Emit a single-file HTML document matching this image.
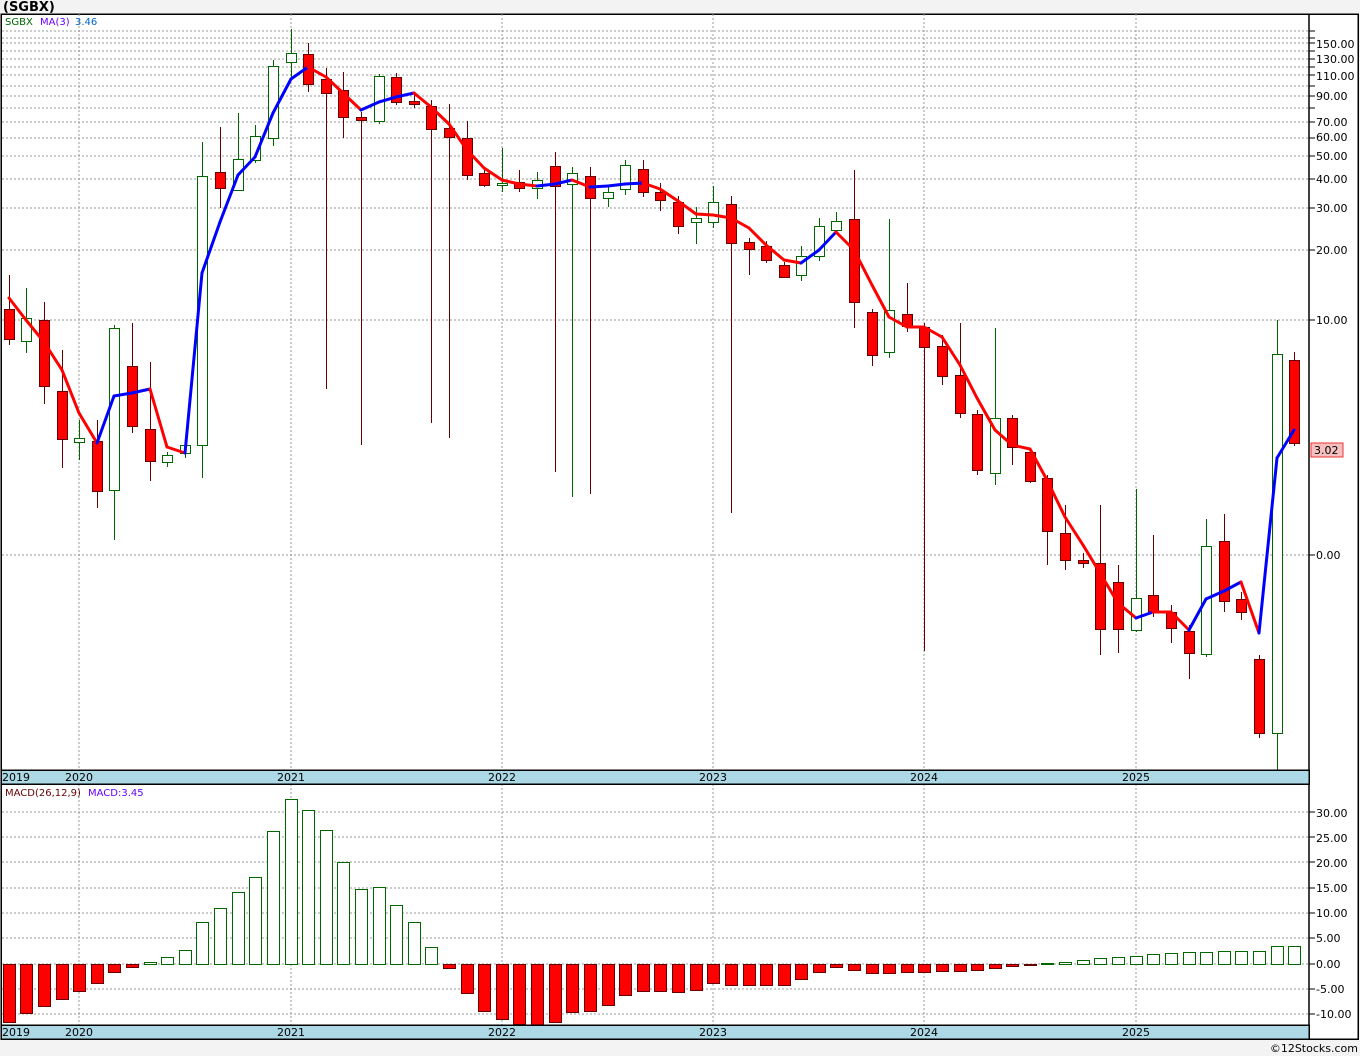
<!DOCTYPE html>
<html><head><meta charset="utf-8"><style>
html,body{margin:0;padding:0;background:#f3f3f3;width:1360px;height:1056px;overflow:hidden;font-family:"Liberation Sans","DejaVu Sans",sans-serif}
svg{position:absolute;left:0;top:0}
text{font-family:"DejaVu Sans","Liberation Sans",sans-serif}
#grid,#cand,#mac,#ticks{shape-rendering:crispEdges}
</style></head><body>
<svg id="s" width="1360" height="1056" xmlns="http://www.w3.org/2000/svg">
<rect x="1" y="14" width="1357" height="1025" fill="#fff" stroke="#000" stroke-width="1.5" shape-rendering="crispEdges"/>
<g id="grid"></g>
<g id="mac"></g>
<g id="cand"></g>
<g id="ma"></g>
<line x1="1309" y1="14" x2="1309" y2="1039" stroke="#000" stroke-width="1.5"/>
<rect x="1" y="770" width="1308" height="14" fill="#add8e6" stroke="#000" stroke-width="1.5" shape-rendering="crispEdges"/>
<rect x="1" y="1025" width="1308" height="14" fill="#add8e6" stroke="#000" stroke-width="1.5" shape-rendering="crispEdges"/>
<g id="ticks"></g>
<text x="3" y="11" font-size="13" font-weight="bold" fill="#000">(SGBX)</text>
<text x="5" y="25" font-size="10" fill="#060">SGBX</text>
<text x="40" y="25" font-size="10" fill="#60f">MA(3)</text>
<text x="75" y="25" font-size="10" fill="#06c">3.46</text>
<text x="5" y="796" font-size="10" fill="#600">MACD(26,12,9)</text>
<text x="88" y="796" font-size="10" fill="#60f">MACD:3.45</text>
<g font-size="11" fill="#000">
<text x="2" y="781">2019</text><text x="65" y="781">2020</text><text x="277" y="781">2021</text><text x="488" y="781">2022</text><text x="699" y="781">2023</text><text x="910" y="781">2024</text><text x="1122" y="781">2025</text>
<text x="2" y="1036">2019</text><text x="65" y="1036">2020</text><text x="277" y="1036">2021</text><text x="488" y="1036">2022</text><text x="699" y="1036">2023</text><text x="910" y="1036">2024</text><text x="1122" y="1036">2025</text>
</g>
<g font-size="11" fill="#000">
<text x="1316" y="48">150.00</text><text x="1316" y="63">130.00</text><text x="1316" y="80">110.00</text><text x="1316" y="100">90.00</text>
<text x="1316" y="126">70.00</text><text x="1316" y="141">60.00</text><text x="1316" y="160">50.00</text><text x="1316" y="183">40.00</text>
<text x="1316" y="212">30.00</text><text x="1316" y="254">20.00</text><text x="1316" y="324">10.00</text><text x="1316" y="559">0.00</text>
<text x="1316" y="817">30.00</text><text x="1316" y="842">25.00</text><text x="1316" y="867">20.00</text><text x="1316" y="892">15.00</text>
<text x="1316" y="917">10.00</text><text x="1316" y="942">5.00</text><text x="1316" y="968">0.00</text><text x="1316" y="993">-5.00</text><text x="1316" y="1018">-10.00</text>
</g>
<rect x="1311" y="443" width="32" height="14" fill="#f6c0c0" stroke="#e33" stroke-width="1"/>
<text x="1314" y="454" font-size="11" fill="#000">3.02</text>
<text x="1358" y="1052" font-size="11" fill="#000" text-anchor="end">©12Stocks.com</text>
</svg>
<script>
var NS="http://www.w3.org/2000/svg";
function el(p,t,a){var e=document.createElementNS(NS,t);for(var k in a)e.setAttribute(k,a[k]);document.getElementById(p).appendChild(e);return e;}
var hy=[31,38,43,51,59,67,75,86,96,108,122,138,156,179,208,250,320,555];
hy.forEach(function(y){el('grid','line',{x1:2,x2:1309,y1:y,y2:y,stroke:'#999','stroke-dasharray':'2,2','stroke-width':1});el('ticks','line',{x1:1309,x2:1315,y1:y,y2:y,stroke:'#000'});});
[812,837,862,888,913,938,964,989,1014].forEach(function(y){el('grid','line',{x1:2,x2:1309,y1:y,y2:y,stroke:'#999','stroke-dasharray':'2,2','stroke-width':1});el('ticks','line',{x1:1309,x2:1315,y1:y,y2:y,stroke:'#000'});});
[79,291,502,713,924,1136].forEach(function(x){el('grid','line',{x1:x,x2:x,y1:14,y2:770,stroke:'#999','stroke-dasharray':'2,2'});el('grid','line',{x1:x,x2:x,y1:784,y2:1025,stroke:'#999','stroke-dasharray':'2,2'});});
var C=[[9,'r',309,339,275,345],[26,'g',318,341,288,353],[44,'r',320,386,302,404],[62,'r',391,439,350,468],[79,'g',438,442,420,460],[97,'r',441,491,420,508],[114,'g',328,490,325,540],[132,'r',366,426,323,433],[150,'r',429,461,362,481],[167,'g',455,462,452,467],[185,'g',445,453,442,458],[202,'g',176,445,142,478],[220,'r',172,188,127,208],[238,'g',159,190,113,190],[255,'g',136,160,125,163],[273,'g',66,138,60,146],[291,'g',53,62,29,78],[308,'r',54,84,43,92],[326,'r',79,93,68,389],[343,'r',90,117,72,138],[361,'r',117,120,112,445],[379,'g',76,121,74,124],[396,'r',77,102,73,105],[414,'r',101,104,95,108],[431,'r',106,129,100,423],[449,'r',128,137,104,438],[467,'r',138,175,121,180],[484,'r',173,185,170,187],[502,'g',183,185,148,192],[519,'r',182,188,170,192],[537,'g',180,188,172,199],[555,'r',166,186,152,472],[572,'g',173,184,167,497],[590,'r',176,198,167,494],[608,'g',192,198,185,207],[625,'g',165,189,160,195],[643,'r',169,192,160,197],[660,'r',192,200,183,211],[678,'r',202,226,196,234],[696,'g',218,222,207,244],[713,'g',202,222,186,228],[731,'r',204,243,196,513],[749,'r',242,249,238,275],[766,'r',246,260,241,263],[784,'r',265,277,262,278],[801,'g',256,275,246,281],[819,'g',226,256,218,261],[836,'g',221,230,212,233],[854,'r',219,302,170,328],[872,'r',312,355,309,366],[889,'g',310,352,219,358],[907,'r',314,326,283,332],[924,'r',327,347,323,651],[942,'r',346,376,335,385],[960,'r',375,413,323,418],[977,'r',414,470,410,475],[995,'g',418,473,328,485],[1012,'r',418,447,415,465],[1030,'r',452,481,448,483],[1047,'r',478,531,475,565],[1065,'r',533,560,505,570],[1083,'r',560,563,553,568],[1100,'r',563,629,505,655],[1118,'r',582,629,565,653],[1136,'g',598,630,489,632],[1153,'r',595,612,535,617],[1171,'r',612,628,605,643],[1189,'r',631,653,625,679],[1206,'g',546,654,519,657],[1224,'r',541,601,514,612],[1241,'r',599,612,592,620],[1259,'r',659,733,655,738],[1277,'g',354,733,320,770],[1294,'r',360,443,352,446]];
C.forEach(function(c){var g=c[1]=='g';var sc=g?'#060':'#600';
el('cand','line',{x1:c[0]+0.5,x2:c[0]+0.5,y1:c[4],y2:c[5],stroke:sc});
el('cand','rect',{x:c[0]-4.5,y:c[2]+0.5,width:10,height:Math.max(2,c[3]-c[2]),fill:g?'#fff':'#f00',stroke:sc});});
var M=[[9,298],[26,320],[44,342],[62,370],[79,413],[97,443],[114,396],[132,393],[150,389],[167,447],[185,453],[202,273],[220,222],[238,175],[255,157],[273,113],[291,79],[308,67],[326,77],[343,93],[361,110],[379,102],[396,97],[414,93],[431,107],[449,124],[467,150],[484,168],[502,180],[519,184],[537,186],[555,184],[572,180],[590,187],[608,186],[625,184],[643,183],[660,189],[678,201],[696,214],[713,215],[731,218],[749,228],[766,245],[784,260],[801,263],[819,250],[836,232],[854,250],[872,285],[889,317],[907,327],[924,327],[942,337],[960,365],[977,398],[995,430],[1012,445],[1030,449],[1047,480],[1065,517],[1083,545],[1100,573],[1118,603],[1136,618],[1153,612],[1171,612],[1189,630],[1206,599],[1224,591],[1241,582],[1259,633],[1277,458],[1294,430]];
for(var i=1;i<M.length;i++){var up=M[i][1]<M[i-1][1];el('ma','line',{x1:M[i-1][0],y1:M[i-1][1],x2:M[i][0],y2:M[i][1],stroke:up?'#00f':'#f00','stroke-width':3,'stroke-linecap':'round'});}
var H=[-58,-49,-42,-35,-27,-19,-8,-3,2,7,14,42,56,72,87,133,165,154,134,102,75,77,59,42,17,-4,-29,-47,-55,-60,-62,-58,-48,-47,-41,-31,-27,-27,-28,-26,-19,-21,-21,-21,-21,-15,-8,-3,-6,-9,-9,-8,-8,-7,-7,-6,-4,-2,-1,1,2,4,6,7,8,10,11,12,12,13,13,13,18,18];
H.forEach(function(h,i){var x=C[i][0];if(h>0)el('mac','rect',{x:x-5.5,y:964.5-h,width:12,height:h,fill:'#fff',stroke:'#060'});else el('mac','rect',{x:x-5.5,y:964.5,width:12,height:-h,fill:'#f00',stroke:'#600'});});
</script>
</body></html>
